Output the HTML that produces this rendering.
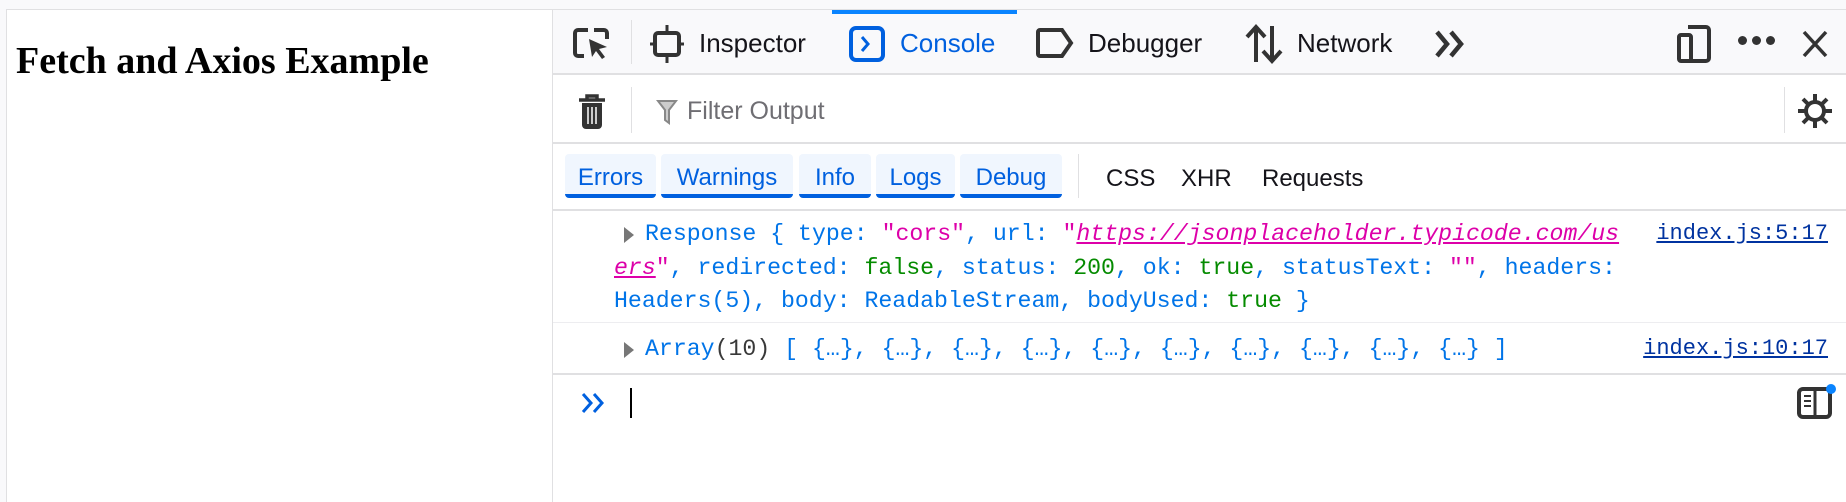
<!DOCTYPE html>
<html><head><meta charset="utf-8"><style>
*{margin:0;padding:0;box-sizing:border-box}
body{width:1846px;height:502px;background:#f9f9fb;position:relative;overflow:hidden;font-family:"Liberation Sans",sans-serif}
.a{position:absolute;white-space:nowrap}
.t{font-size:26px;color:#15141a;top:28px}
.m{font-family:"Liberation Mono",monospace;font-size:23.2px;color:#0074e8}
.s{color:#dd00a9}.g{color:#058b00}.k{color:#393939}
.btn{position:absolute;top:154px;height:44px;background:#f0f6fe;border-bottom:4px solid #0060df;border-radius:4px;color:#0060df;font-size:24px;line-height:48px;text-align:center}
svg{position:absolute}
</style></head><body>
<div class="a" style="left:6px;top:9px;width:547px;height:493px;background:#fff;border-left:1px solid #e0e0e2;border-top:1px solid #e0e0e2;border-right:1px solid #e0e0e2"></div>
<div class="a" style="left:16px;top:39px;font-family:'Liberation Serif',serif;font-weight:bold;font-size:38px;color:#000">Fetch and Axios Example</div>
<!-- devtools -->
<div class="a" style="left:553px;top:9px;width:1293px;height:66px;background:#f9f9fb;border-top:1px solid #e0e0e2;border-bottom:2px solid #e0e0e2"></div>
<div class="a" style="left:553px;top:75px;width:1293px;height:427px;background:#fff"></div>
<div class="a" style="left:832px;top:10px;width:185px;height:4px;background:#0a84ff"></div>
<svg style="left:572px;top:26px" width="40" height="36" viewBox="0 0 40 36"><path d="M16 4H6a3 3 0 0 0-3 3v20a3 3 0 0 0 3 3h6M22 4h10a3 3 0 0 1 3 3v6" fill="none" stroke="#333" stroke-width="4"/><path d="M17 13l18 8-8 2 6 8-3 2-6-8-4 6z" fill="#333"/></svg>
<div class="a" style="left:631px;top:20px;width:1px;height:44px;background:#e0e0e2"></div>
<svg style="left:649px;top:24px" width="36" height="40" viewBox="0 0 36 40"><rect x="6" y="9" width="24" height="22" rx="3" fill="none" stroke="#333" stroke-width="4"/><path d="M18 1v8M18 31v8M1 20h5M30 20h5" stroke="#333" stroke-width="3"/></svg>
<div class="a t" style="left:699px">Inspector</div>
<svg style="left:849px;top:26px" width="36" height="36" viewBox="0 0 36 36"><rect x="2" y="2" width="32" height="32" rx="5" fill="none" stroke="#0060df" stroke-width="4"/><path d="M13 11l6 7-6 7" fill="none" stroke="#0060df" stroke-width="3"/></svg>
<div class="a t" style="left:900px;color:#0060df">Console</div>
<svg style="left:1035px;top:27px" width="40" height="32" viewBox="0 0 40 32"><path d="M5 3h22l9 13-9 13H5a2 2 0 0 1-2-2V5a2 2 0 0 1 2-2z" fill="none" stroke="#333" stroke-width="4"/></svg>
<div class="a t" style="left:1088px">Debugger</div>
<svg style="left:1244px;top:24px" width="40" height="40" viewBox="0 0 40 40"><path d="M12 38V4M3 13l9-10 9 10M28 2v34M19 27l9 10 9-10" fill="none" stroke="#333" stroke-width="4"/></svg>
<div class="a t" style="left:1297px">Network</div>
<svg style="left:1434px;top:30px" width="34" height="28" viewBox="0 0 34 28"><path d="M3 2l10 12-10 12M17 2l10 12-10 12" fill="none" stroke="#333" stroke-width="4.5"/></svg>
<svg style="left:1676px;top:23px" width="36" height="42" viewBox="0 0 36 42"><path d="M12 4h18a3 3 0 0 1 3 3v28a3 3 0 0 1-3 3H12" fill="none" stroke="#333" stroke-width="4"/><rect x="3" y="12" width="12" height="26" rx="2" fill="none" stroke="#333" stroke-width="4"/></svg>
<div class="a" style="left:1738px;top:36px;width:38px;height:10px"><span style="position:absolute;left:0;width:9px;height:9px;border-radius:50%;background:#333"></span><span style="position:absolute;left:14px;width:9px;height:9px;border-radius:50%;background:#333"></span><span style="position:absolute;left:28px;width:9px;height:9px;border-radius:50%;background:#333"></span></div>
<svg style="left:1802px;top:30px" width="26" height="28" viewBox="0 0 26 28"><path d="M2 2l22 24M24 2L2 26" stroke="#333" stroke-width="3.5"/></svg>
<!-- filter row -->
<svg style="left:577px;top:93px" width="30" height="38" viewBox="0 0 30 38"><path d="M2 7h26M10 7V3h10v4" fill="none" stroke="#333" stroke-width="3.5"/><path d="M5 10h20v22a4 4 0 0 1-4 4H9a4 4 0 0 1-4-4z" fill="#333"/><path d="M11 14v17M15 14v17M19 14v17" stroke="#fff" stroke-width="1.5"/></svg>
<div class="a" style="left:631px;top:87px;width:1px;height:46px;background:#e0e0e2"></div>
<svg style="left:656px;top:99px" width="22" height="26" viewBox="0 0 22 26"><path d="M2 2h18l-7 9v13l-4-3V11z" fill="#ccc" stroke="#888" stroke-width="2"/></svg>
<div class="a" style="left:687px;top:97px;font-size:25px;color:#6f6e73">Filter Output</div>
<div class="a" style="left:1784px;top:87px;width:1px;height:46px;background:#e0e0e2"></div>
<svg style="left:1797px;top:93px" width="36" height="36" viewBox="0 0 36 36"><circle cx="18" cy="18" r="9" fill="none" stroke="#333" stroke-width="4"/><path d="M18 1v8M18 27v8M1 18h8M27 18h8M6 6l5 5M25 25l5 5M30 6l-5 5M6 30l5-5" stroke="#333" stroke-width="4"/></svg>
<div class="a" style="left:553px;top:142px;width:1293px;height:2px;background:#e0e0e2"></div>
<!-- buttons -->
<div class="btn" style="left:565px;width:91px">Errors</div>
<div class="btn" style="left:661px;width:132px">Warnings</div>
<div class="btn" style="left:799px;width:72px">Info</div>
<div class="btn" style="left:876px;width:79px">Logs</div>
<div class="btn" style="left:960px;width:102px">Debug</div>
<div class="a" style="left:1078px;top:154px;width:1px;height:44px;background:#e0e0e2"></div>
<div class="a" style="left:1106px;top:165px;font-size:24px;color:#15141a">CSS</div>
<div class="a" style="left:1181px;top:165px;font-size:24px;color:#15141a">XHR</div>
<div class="a" style="left:1262px;top:165px;font-size:24px;color:#15141a">Requests</div>
<div class="a" style="left:553px;top:209px;width:1293px;height:2px;background:#e0e0e2"></div>
<!-- messages -->
<svg style="left:623px;top:226px" width="12" height="18" viewBox="0 0 12 18"><path d="M1 1l10 8-10 8z" fill="#777"/></svg>
<div class="a m" style="left:645px;top:221px">Response { type: <span class="s">"cors"</span>, url: <span class="s">"<i style="text-decoration:underline">https://jsonplaceholder.typicode.com/us</i></span></div>
<div class="a m" style="left:614px;top:255px"><span class="s"><i style="text-decoration:underline">ers</i>"</span>, redirected: <span class="g">false</span>, status: <span class="g">200</span>, ok: <span class="g">true</span>, statusText: <span class="s">""</span>, headers:</div>
<div class="a m" style="left:614px;top:288px">Headers(5), body: ReadableStream, bodyUsed: <span class="g">true</span> }</div>
<div class="a" style="right:18px;top:221px;font-family:'Liberation Mono',monospace;font-size:22px;color:#0033a0;text-decoration:underline">index.js:5:17</div>
<div class="a" style="left:553px;top:322px;width:1293px;height:1px;background:#ededf0"></div>
<svg style="left:623px;top:341px" width="12" height="18" viewBox="0 0 12 18"><path d="M1 1l10 8-10 8z" fill="#777"/></svg>
<div class="a m" style="left:645px;top:336px">Array<span class="k">(10)</span> [ {…}, {…}, {…}, {…}, {…}, {…}, {…}, {…}, {…}, {…} ]</div>
<div class="a" style="right:18px;top:336px;font-family:'Liberation Mono',monospace;font-size:22px;color:#0033a0;text-decoration:underline">index.js:10:17</div>
<div class="a" style="left:553px;top:373px;width:1293px;height:2px;background:#e0e0e2"></div>
<svg style="left:581px;top:392px" width="26" height="22" viewBox="0 0 26 22"><path d="M2 2l8 9-8 9M13 2l8 9-8 9" fill="none" stroke="#0060df" stroke-width="3"/></svg>
<div class="a" style="left:630px;top:388px;width:2px;height:30px;background:#000"></div>
<svg style="left:1797px;top:383px" width="40" height="38" viewBox="0 0 40 38"><rect x="2" y="6" width="31" height="28" rx="4" fill="none" stroke="#333" stroke-width="4"/><path d="M18 6v28" stroke="#333" stroke-width="3"/><path d="M7 13h7M7 18h7M7 23h7" stroke="#333" stroke-width="2"/><circle cx="34" cy="6" r="5" fill="#0a84ff"/></svg>
</body></html>
